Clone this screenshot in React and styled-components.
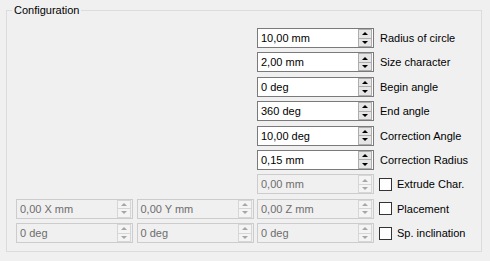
import React from "react";
import styled, { createGlobalStyle } from "styled-components";

const GlobalStyle = createGlobalStyle`
  html, body {
    margin: 0;
    padding: 0;
    background: #f0f0f0;
  }
  body {
    font-family: "Liberation Sans", Arial, sans-serif;
    font-size: 11px;
    color: #000;
  }
`;

const Group = styled.fieldset`
  box-sizing: border-box;
  width: 476px;
  margin: 4px 0 0 6px;
  padding: 11px 0 8px 9px;
  border: 1px solid #dcdcdc;
  border-radius: 0;
  min-width: 0;
`;

const Title = styled.legend`
  margin-left: -4px;
  padding: 0 2px;
  line-height: 13px;
  font-size: 11px;
`;

const Grid = styled.div`
  display: grid;
  grid-template-columns: 117px 117px 117px auto;
  grid-auto-rows: 20px;
  column-gap: 3.5px;
  row-gap: 4.4px;
  align-items: center;
`;

const Field = styled.div`
  grid-column: ${(p) => p.col};
  box-sizing: border-box;
  height: 20px;
  display: flex;
  align-items: stretch;
  border: 1px solid ${(p) => (p.disabled ? "#cccccc" : "#7a7a7a")};
  background: ${(p) => (p.disabled ? "#f0f0f0" : "#ffffff")};
  color: ${(p) => (p.disabled ? "#6d6d6d" : "#000000")};
`;

const Value = styled.span`
  flex: 1;
  padding-left: 3px;
  line-height: 18px;
  white-space: nowrap;
  overflow: hidden;
`;

const Spin = styled.div`
  width: 14px;
  margin: 0 1px 0 0;
  display: flex;
  flex-direction: column;
`;

const SpinHalf = styled.div`
  flex: 1;
  box-sizing: border-box;
  border: 1px solid ${(p) => (p.disabled ? "#d6d6d6" : "#adadad")};
  border-top-width: ${(p) => (p.down ? "0" : "1px")};
  background: ${(p) => (p.disabled ? "#f4f4f4" : "#e5e5e5")};
  display: flex;
  align-items: center;
  justify-content: center;
`;

const Arrow = styled.span`
  width: 0;
  height: 0;
  border-left: 3px solid transparent;
  border-right: 3px solid transparent;
  ${(p) =>
    p.down
      ? `border-top: 3px solid ${p.disabled ? "#a6a6a6" : "#000"};`
      : `border-bottom: 3px solid ${p.disabled ? "#a6a6a6" : "#000"};`}
`;

const Label = styled.span`
  grid-column: 4;
  margin-left: 2.5px;
  white-space: nowrap;
`;

const CheckRow = styled.label`
  grid-column: 4;
  margin-left: 1.5px;
  display: flex;
  align-items: center;
  gap: 5px;
  white-space: nowrap;
`;

const Box = styled.span`
  box-sizing: border-box;
  width: 13px;
  height: 13px;
  border: 1px solid #333333;
  background: #ffffff;
`;

const SpinBox = ({ value, col, disabled }) => (
  <Field col={col} disabled={disabled}>
    <Value>{value}</Value>
    <Spin>
      <SpinHalf disabled={disabled}>
        <Arrow disabled={disabled} />
      </SpinHalf>
      <SpinHalf down disabled={disabled}>
        <Arrow down disabled={disabled} />
      </SpinHalf>
    </Spin>
  </Field>
);

const params = [
  ["10,00 mm", "Radius of circle"],
  ["2,00 mm", "Size character"],
  ["0 deg", "Begin angle"],
  ["360 deg", "End angle"],
  ["10,00 deg", "Correction Angle"],
  ["0,15 mm", "Correction Radius"],
];

export default function App() {
  return (
    <>
      <GlobalStyle />
      <Group>
        <Title>Configuration</Title>
        <Grid>
          {params.map(([value, label]) => (
            <React.Fragment key={label}>
              <SpinBox col={3} value={value} />
              <Label>{label}</Label>
            </React.Fragment>
          ))}

          <SpinBox col={3} value="0,00 mm" disabled />
          <CheckRow>
            <Box />
            Extrude Char.
          </CheckRow>

          <SpinBox col={1} value="0,00 X mm" disabled />
          <SpinBox col={2} value="0,00 Y mm" disabled />
          <SpinBox col={3} value="0,00 Z mm" disabled />
          <CheckRow>
            <Box />
            Placement
          </CheckRow>

          <SpinBox col={1} value="0 deg" disabled />
          <SpinBox col={2} value="0 deg" disabled />
          <SpinBox col={3} value="0 deg" disabled />
          <CheckRow>
            <Box />
            Sp. inclination
          </CheckRow>
        </Grid>
      </Group>
    </>
  );
}
